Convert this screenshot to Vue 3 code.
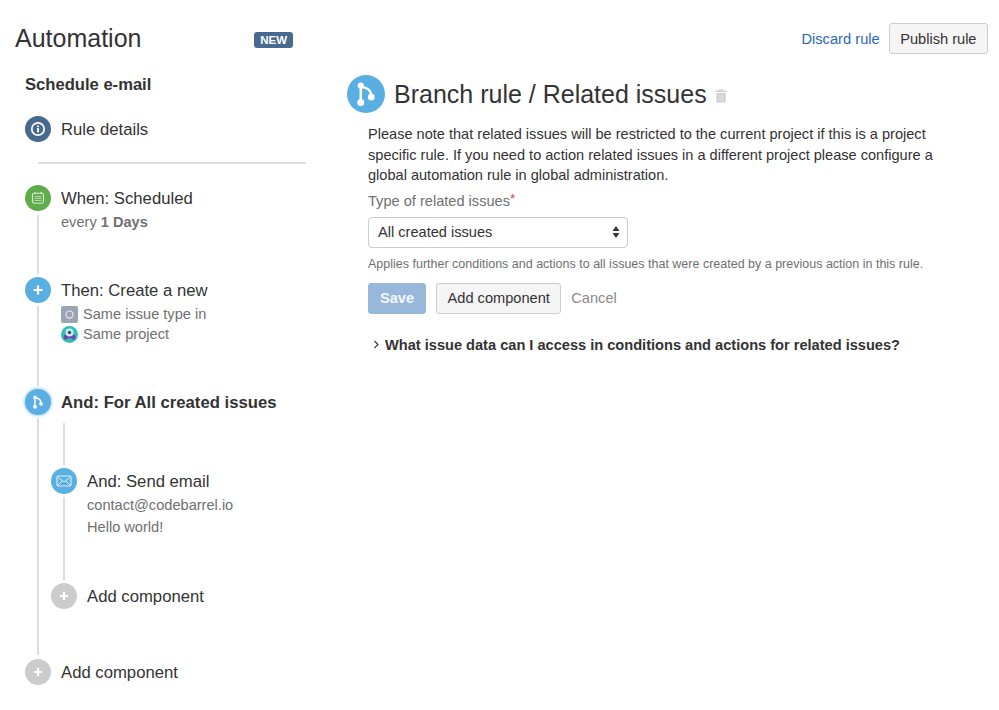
<script setup>
</script>

<template>
  <div class="page">
    <aside class="side">
      <div class="brand">
        <h1>Automation</h1>
        <span class="lozenge">NEW</span>
      </div>
      <div class="rule-name">Schedule e-mail</div>
      <div class="step details">
        <span class="dot navy">
          <svg width="16" height="16" viewBox="0 0 16 16"><circle cx="8" cy="8" r="6.2" fill="none" stroke="#fff" stroke-width="1.7"/><rect x="7.1" y="7" width="1.8" height="4.4" fill="#fff"/><rect x="7.1" y="4.5" width="1.8" height="1.7" fill="#fff"/></svg>
        </span>
        <div class="label">Rule details</div>
      </div>
      <hr class="rule" />
      <div class="tree">
        <div class="spine"></div>
        <div class="step when">
          <span class="dot green">
            <svg width="14" height="14" viewBox="0 0 14 14"><rect x="1.5" y="2.2" width="11" height="10" rx="1.6" fill="none" stroke="#d9ecd3" stroke-width="1.1"/><path d="M4 1v2M10 1v2" stroke="#d9ecd3" stroke-width="1.1"/><path d="M3.500 5.500h7M3.500 7.500h7M3.500 9.500h7" stroke="#b5d9ab" stroke-width="1.200"/></svg>
          </span>
          <div>
            <div class="label">When: Scheduled</div>
            <div class="sub">every <b>1 Days</b></div>
          </div>
        </div>
        <div class="step then">
          <span class="dot blue">
            <svg width="12" height="12" viewBox="0 0 12 12"><path d="M6 1.500v9M1.500 6h9" stroke="#fff" stroke-width="2.200"/></svg>
          </span>
          <div>
            <div class="label">Then: Create a new</div>
            <div class="sub icon-row">
              <span class="type-icon"><svg width="11" height="11" viewBox="0 0 10 10"><circle cx="5" cy="5" r="3.200" fill="none" stroke="#e4e7eb" stroke-width="1.100"/></svg></span>
              Same issue type in
            </div>
            <div class="sub icon-row second">
              <svg class="avatar" width="17" height="17" viewBox="0 0 17 17"><circle cx="8.500" cy="8.500" r="8.500" fill="#2fc0b4"/><path d="M2.500 10.500c1-2 2-2 3-2h6c1 0 2 0 3 2l-1 3h-2l-1-1.200h-4L5.500 13.500h-2z" fill="#7a3fb0"/><circle cx="8.500" cy="6.500" r="4" fill="#cfe9f3"/><circle cx="8.500" cy="6.500" r="1.700" fill="#34506e"/></svg>
              Same project
            </div>
          </div>
        </div>
        <div class="step branch">
          <span class="dot blue glow">
            <svg width="16" height="16" viewBox="0 0 16 16"><path d="M5 3v10M5 4c3.500 0 6 1.800 6 5.500" fill="none" stroke="#fff" stroke-width="1.400"/><circle cx="5" cy="3.200" r="1.800" fill="#fff"/><circle cx="5" cy="12.800" r="2" fill="#fff"/><circle cx="11" cy="9.800" r="1.900" fill="#fff"/></svg>
          </span>
          <div class="label strong">And: For All created issues</div>
        </div>
        <div class="nested">
          <div class="spine inner"></div>
          <div class="step send">
            <span class="dot blue">
              <svg width="16" height="12" viewBox="0 0 16 12"><rect x="1" y="1" width="14" height="10" rx="1.500" fill="none" stroke="#dff0fa" stroke-width="1.100"/><path d="M1.500 2l6.500 5 6.500-5M1.500 10.500l4.500-4.500M14.500 10.500l-4.500-4.500" fill="none" stroke="#dff0fa" stroke-width="1"/></svg>
            </span>
            <div>
              <div class="label">And: Send email</div>
              <div class="sub mail">contact@codebarrel.io</div>
              <div class="sub hello">Hello world!</div>
            </div>
          </div>
          <div class="step add-inner">
            <span class="dot grey">
              <svg width="12" height="12" viewBox="0 0 12 12"><path d="M6 2v8M2 6h8" stroke="#fff" stroke-width="2.200"/></svg>
            </span>
            <div class="label">Add component</div>
          </div>
        </div>
        <div class="step add-outer">
          <span class="dot grey">
            <svg width="12" height="12" viewBox="0 0 12 12"><path d="M6 2v8M2 6h8" stroke="#fff" stroke-width="2.200"/></svg>
          </span>
          <div class="label">Add component</div>
        </div>
      </div>
    </aside>

    <main class="main">
      <div class="actions">
        <a class="link">Discard rule</a>
        <button class="btn">Publish rule</button>
      </div>
      <div class="title-row">
        <span class="big-dot">
          <svg width="28" height="28" viewBox="0 0 16 16"><path d="M5 3v10M5 4c3.500 0 6 1.800 6 5.500" fill="none" stroke="#fff" stroke-width="1.400"/><circle cx="5" cy="3.200" r="1.800" fill="#fff"/><circle cx="5" cy="12.800" r="2" fill="#fff"/><circle cx="11" cy="9.800" r="1.900" fill="#fff"/></svg>
        </span>
        <h2>Branch rule / Related issues</h2>
        <svg class="trash" width="12" height="15" viewBox="0 0 12 15"><path d="M4 1.500h4v1h3.500v1.500H.5V2.500H4zM1.300 5h9.400v8.500a1 1 0 0 1-1 1H2.300a1 1 0 0 1-1-1z" fill="#d0d0d0"/><path d="M4 6.500v6.500M6 6.500v6.500M8 6.500v6.500" stroke="#eee" stroke-width=".7"/></svg>
      </div>
      <div class="form">
        <p class="note">Please note that related issues will be restricted to the current project if this is a project<br />specific rule. If you need to action related issues in a different project please configure a<br />global automation rule in global administration.</p>
        <div class="field-label">Type of related issues<span class="req">*</span></div>
        <div class="select">
          <span>All created issues</span>
          <svg width="8" height="14" viewBox="0 0 8 14"><path d="M4 1l3.500 5H.5zM4 13L.5 8h7z" fill="#333"/></svg>
        </div>
        <div class="help">Applies further conditions and actions to all issues that were created by a previous action in this rule.</div>
        <div class="buttons">
          <button class="btn save">Save</button>
          <button class="btn">Add component</button>
          <span class="cancel">Cancel</span>
        </div>
        <div class="disclosure">
          <svg width="7" height="9" viewBox="0 0 7 9"><path d="M1.500 1l3.500 3.500L1.500 8" fill="none" stroke="#333" stroke-width="1.100"/></svg>
          <b>What issue data can I access in conditions and actions for related issues?</b>
        </div>
      </div>
    </main>
  </div>
</template>

<style>
html, body { margin: 0; background: #fff; }
</style>

<style scoped>
.page {
  width: 999px;
  height: 710px;
  overflow: hidden;
  display: flex;
  box-sizing: border-box;
  font-family: "Liberation Sans", Arial, sans-serif;
  color: #333;
}
.side { width: 347px; flex: none; box-sizing: border-box; padding: 0 0 0 25px; }
.brand { display: flex; align-items: center; height: 38px; margin: 19px 0 0 -10px; width: 278px; justify-content: space-between; }
h1 { margin: 0; font-weight: 400; font-size: 25px; line-height: 38px; color: #333; }
.lozenge { background: #486a8f; color: #fff; font-weight: 700; font-size: 11.500px; line-height: 16px; padding: 0 6px; border-radius: 3px; margin-top: 4px; }
.rule-name { font-weight: 700; font-size: 16.600px; line-height: 20px; margin-top: 18px; }
.step { display: flex; gap: 10px; position: relative; }
.dot { width: 26px; height: 26px; border-radius: 50%; display: flex; align-items: center; justify-content: center; flex: none; box-shadow: 0 0 0 3px #fff; position: relative; }
.navy { background: #486a8f; }
.green { background: #5fad4d; }
.blue { background: #59afe1; }
.grey { background: #ccc; }
.glow { box-shadow: 0 0 3px 1px #a9d5f0, 0 0 0 3px #fff; }
.label { font-size: 16.700px; line-height: 28px; margin-bottom: -2px; color: #333; position: relative; }
.strong { font-weight: 700; }
.sub { font-size: 14.600px; line-height: 20px; color: #707070; }
.sub b { font-weight: 700; }
.details { margin-top: 21px; }
.rule { border: 0; height: 2px; background: #ddd; margin: 20px 0 0 13px; width: 268px; }
.tree { position: relative; margin-top: 21px; }
.spine { position: absolute; left: 12px; top: 30px; width: 2px; height: 440px; background: #ddd; }
.when { height: 92px; }
.when .sub { margin-top: 1px; }
.then { height: 112px; }
.icon-row { display: flex; align-items: center; gap: 5px; margin-top: 1px; height: 20px; }
.icon-row.second { margin-top: 0; }
.type-icon { width: 17px; height: 17px; background: #9aa5b3; border-radius: 2px; display: flex; align-items: center; justify-content: center; }
.branch { height: 34px; }
.nested { position: relative; margin-left: 26px; padding-top: 45px; }
.nested .spine.inner { top: 0; height: 157px; left: 12px; }
.send { height: 115px; }
.send .mail { margin-top: 1px; }
.send .hello { margin-top: 2px; }
.add-inner { height: 76px; }
.main { flex: 1; position: relative; padding-right: 11px; }
.actions { display: flex; justify-content: flex-end; align-items: center; gap: 9px; height: 31px; margin-top: 23px; }
.link { color: #2a67b1; font-size: 14.700px; }
.btn { font-family: inherit; font-size: 14.600px; color: #333; background: #f5f5f5; border: 1px solid #ccc; border-radius: 3px; height: 31px; padding: 0 10.500px; }
.title-row { display: flex; align-items: center; height: 38px; margin-top: 21px; }
.big-dot { width: 38px; height: 38px; border-radius: 50%; background: #59afe1; display: flex; align-items: center; justify-content: center; }
h2 { margin: 0 0 0 9px; font-weight: 400; font-size: 25px; line-height: 38px; color: #333; }
.trash { margin-left: 8px; margin-top: 3px; }
.form { margin-left: 21px; margin-top: 11px; }
.note { margin: 0; font-size: 14.570px; line-height: 20.500px; color: #333; }
.field-label { font-size: 14.600px; line-height: 20px; color: #707070; margin-top: 5px; }
.req { color: #d04437; font-size: 13px; vertical-align: 3px; line-height: 0; }
.select { width: 260px; height: 31px; box-sizing: border-box; margin-top: 6px; border: 1px solid #ccc; border-radius: 4px; display: flex; align-items: center; justify-content: space-between; padding: 0 7px 0 9px; font-size: 14.600px; color: #333; }
.help { font-size: 12.500px; line-height: 16px; color: #707070; margin-top: 8px; }
.buttons { display: flex; align-items: center; gap: 10px; margin-top: 11px; }
.save { background: #97b8da; border-color: #97b8da; color: #f3f7fb; font-weight: 700; padding: 0 11px; }
.cancel { font-size: 14.600px; color: #8a8a8a; }
.disclosure { display: flex; align-items: center; gap: 5px; margin-top: 23px; margin-left: 5px; font-size: 14.600px; }
</style>
